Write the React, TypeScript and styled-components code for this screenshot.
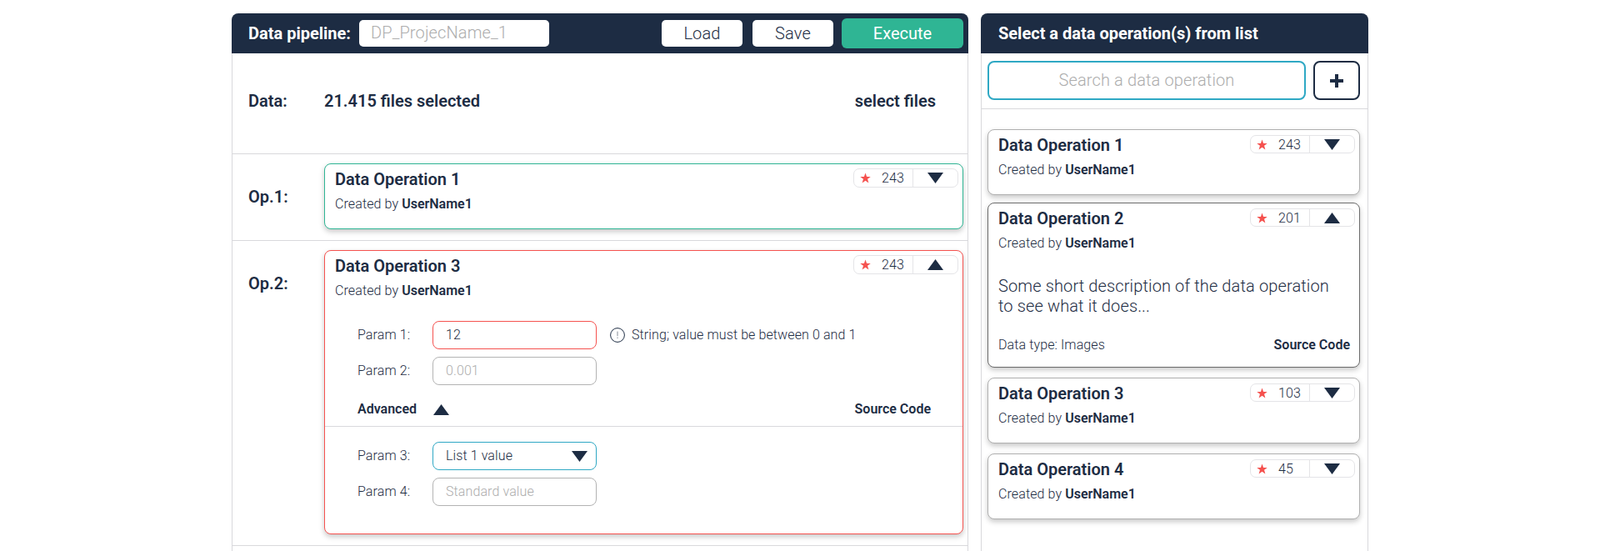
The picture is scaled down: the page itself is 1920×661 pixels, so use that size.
import { createGlobalStyle, styled } from "styled-components";

const NAVY = "#1d2c43";
const GREEN = "#2fb594";
const RED = "#f5524f";
const BLUE = "#2fa8c4";
const LINE = "#d9d9dc";

const GlobalStyle = createGlobalStyle`
  html, body {
    margin: 0;
    padding: 0;
    background: #fff;
    height: 100%;
    overflow: hidden;
  }
  body {
    font-family: Roboto, "Liberation Sans", sans-serif;
    color: ${NAVY};
  }
  * {
    box-sizing: border-box;
  }
  input {
    font-family: inherit;
  }
`;

const Page = styled.div`
  display: flex;
  gap: 15px;
  padding: 16px 278px 0;
  height: 661px;
  overflow: hidden;
`;

const Panel = styled.section<{ $width: number }>`
  width: ${(p) => p.$width}px;
  flex: none;
  height: 800px;
  border: 1px solid ${LINE};
  border-top: 0;
  border-radius: 8px 8px 0 0;
`;

const PanelHeader = styled.header<{ $inset: number }>`
  height: 48px;
  margin: 0 -1px;
  background: ${NAVY};
  border-radius: 8px 8px 0 0;
  display: flex;
  align-items: center;
  padding: 0 6px 0 ${(p) => p.$inset}px;
  color: #fff;
  font-size: 20px;
  font-weight: 700;
`;

const NameInput = styled.input`
  width: 228px;
  height: 32px;
  margin-left: 10px;
  border: 0;
  border-radius: 5px;
  padding: 0 14px 2px;
  font-size: 20px;
  font-weight: 300;
  letter-spacing: 0.0065em;
  outline: none;
  &::placeholder {
    color: #adadad;
    opacity: 1;
  }
`;

const HeaderActions = styled.div`
  margin-left: auto;
  display: flex;
  align-items: center;
`;

const HeaderButton = styled.button`
  width: 97px;
  height: 32px;
  margin-right: 12px;
  border: 0;
  border-radius: 5px;
  background: #fff;
  color: ${NAVY};
  font-family: inherit;
  font-size: 20px;
  font-weight: 300;
  letter-spacing: 0.0065em;
`;

const ExecuteButton = styled.button`
  width: 146px;
  height: 36px;
  margin-left: -2px;
  border: 0;
  border-radius: 6px;
  background: ${GREEN};
  color: #fff;
  font-family: inherit;
  font-size: 20px;
  font-weight: 400;
`;

const DataRow = styled.div`
  height: 121px;
  display: flex;
  align-items: center;
  padding: 0 38px 7px 19px;
  border-bottom: 1px solid ${LINE};
  font-size: 20px;
  font-weight: 600;
`;

const RowLabel = styled.div`
  width: 91px;
  flex: none;
  font-size: 20px;
  font-weight: 600;
  line-height: 24px;
`;

const SelectFiles = styled.span`
  margin-left: auto;
`;

const OpRow = styled.div`
  display: flex;
  padding: 11px 5px 13px 19px;
  border-bottom: 1px solid ${LINE};

  ${RowLabel} {
    padding-top: 28px;
  }
`;

const Card = styled.article<{ $border: string }>`
  flex: 1;
  min-width: 0;
  background: #fff;
  border: 1px solid ${(p) => p.$border};
  border-radius: 8px;
  box-shadow: 0 3px 6px rgba(0, 0, 0, 0.22);
  padding-top: 5px;
`;

const CardHead = styled.div`
  display: flex;
  align-items: flex-start;
  justify-content: space-between;
  padding: 0 5px 0 12px;
`;

const CardTitle = styled.h3`
  margin: 0;
  font-size: 20px;
  font-weight: 600;
  line-height: 26px;
`;

const Rating = styled.div`
  width: 126px;
  height: 23px;
  display: flex;
  align-items: center;
  border: 1px solid #e4e4e7;
  border-radius: 7px;
`;

const RatingCount = styled.div`
  width: 71px;
  height: 100%;
  flex: none;
  display: flex;
  align-items: center;
  padding-left: 7px;
  border-right: 1px solid #e4e4e7;
  font-size: 16px;
  font-weight: 300;
  letter-spacing: 0.0065em;

  svg {
    margin-right: 13px;
  }
`;

const RatingToggle = styled.div`
  flex: 1;
  display: flex;
  justify-content: center;
`;

const CreatedBy = styled.p`
  margin: 7px 0 0;
  padding: 0 12px;
  font-size: 16px;
  font-weight: 300;
  letter-spacing: 0.0065em;
  line-height: 20px;

  b {
    font-weight: 600;
    letter-spacing: 0;
  }
`;

const CompactEnd = styled.div`
  height: 19px;
`;

const ParamBlock = styled.div<{ $pt: number; $pb: number }>`
  display: flex;
  flex-direction: column;
  gap: 9px;
  padding: ${(p) => p.$pt}px 0 ${(p) => p.$pb}px 39px;
`;

const ParamRow = styled.div`
  display: flex;
  align-items: center;
  font-size: 16px;
  font-weight: 300;
  letter-spacing: 0.0065em;
`;

const ParamLabel = styled.label`
  width: 90px;
  flex: none;
  padding-bottom: 2px;
`;

const ParamInput = styled.input<{ $error?: boolean }>`
  width: 197px;
  height: 34px;
  border: 1px solid ${(p) => (p.$error ? RED : "#b3b3b3")};
  border-radius: 8px;
  padding: 0 15px 2px;
  font-size: 16px;
  font-weight: 300;
  letter-spacing: 0.0065em;
  color: ${NAVY};
  outline: none;
  &::placeholder {
    color: #adadad;
    opacity: 1;
  }
`;

const ParamSelect = styled.div`
  width: 197px;
  height: 34px;
  display: flex;
  align-items: center;
  justify-content: space-between;
  border: 1px solid ${BLUE};
  border-radius: 8px;
  padding: 0 10px 0 15px;

  span {
    padding-bottom: 2px;
  }
`;

const Hint = styled.div`
  display: flex;
  align-items: center;
  gap: 8px;
  margin-left: 16px;

  span {
    padding-bottom: 2px;
  }
`;

const AdvancedBar = styled.div`
  display: flex;
  align-items: center;
  justify-content: space-between;
  padding: 19px 38px 10px 39px;
  border-bottom: 1px solid ${LINE};
  font-size: 16px;
  font-weight: 600;
  line-height: 20px;
`;

const AdvancedLabel = styled.div`
  display: flex;
  align-items: center;
  gap: 20px;
`;

const SearchRow = styled.div`
  display: flex;
  gap: 9px;
  padding: 9px 9px 10px 7px;
  border-bottom: 1px solid ${LINE};
`;

const SearchInput = styled.input`
  flex: 1;
  min-width: 0;
  height: 47px;
  border: 2px solid ${BLUE};
  border-radius: 8px;
  padding: 0 0 2px;
  text-align: center;
  font-size: 20px;
  font-weight: 300;
  letter-spacing: 0.0065em;
  outline: none;
  &::placeholder {
    color: #adadad;
    opacity: 1;
  }
`;

const AddButton = styled.button`
  width: 56px;
  height: 47px;
  flex: none;
  display: flex;
  align-items: center;
  justify-content: center;
  background: #fff;
  border: 2px solid ${NAVY};
  border-radius: 8px;
  padding: 0;
`;

const CardList = styled.div`
  display: flex;
  flex-direction: column;
  gap: 12px;
  padding: 24px 9px 0 7px;

  & > :first-child {
    margin-bottom: -3px;
  }

  ${Rating} {
    margin-top: 1px;
    height: 22px;
  }
`;

const Description = styled.p`
  margin: 29px 0 0;
  padding: 0 12px;
  font-size: 20px;
  font-weight: 300;
  letter-spacing: 0.0065em;
  line-height: 24px;
`;

const CardFooter = styled.div`
  display: flex;
  justify-content: space-between;
  margin-top: 25px;
  padding: 0 11px 16px 12px;
  font-size: 16px;
  line-height: 20px;
  font-weight: 300;
  letter-spacing: 0.0065em;

  b {
    font-weight: 600;
    letter-spacing: 0;
  }
`;

function Triangle({ up }: { up?: boolean }) {
  return (
    <svg width="19" height="13" viewBox="0 0 19 13" style={{ display: "block", flex: "none" }}>
      <polygon points={up ? "9.5,0 19,13 0,13" : "0,0 19,0 9.5,13"} fill={NAVY} />
    </svg>
  );
}

function Star() {
  return (
    <svg width="13" height="13" viewBox="0 0 24 24" style={{ flex: "none" }}>
      <polygon
        points="12,1 15,9 23.5,9 16.7,14.4 19.2,23 12,18 4.8,23 7.3,14.4 0.5,9 9,9"
        fill={RED}
      />
    </svg>
  );
}

function InfoIcon() {
  return (
    <svg width="18" height="18" viewBox="0 0 18 18" style={{ flex: "none" }}>
      <circle cx="9" cy="9" r="8.4" fill="none" stroke={NAVY} strokeWidth="1" />
      <rect x="8.4" y="4.6" width="1.2" height="5.6" fill="#9a9fa8" />
      <rect x="8.4" y="11.6" width="1.2" height="1.4" fill="#9a9fa8" />
    </svg>
  );
}

function PlusIcon() {
  return (
    <svg width="16" height="16" viewBox="0 0 16 16">
      <path d="M6 0h4v6h6v4h-6v6H6v-6H0V6h6z" fill={NAVY} />
    </svg>
  );
}

function RatingBox({ count, open }: { count: number; open?: boolean }) {
  return (
    <Rating>
      <RatingCount>
        <Star />
        {count}
      </RatingCount>
      <RatingToggle>
        <Triangle up={open} />
      </RatingToggle>
    </Rating>
  );
}

function OpHead({ title, count, open }: { title: string; count: number; open?: boolean }) {
  return (
    <>
      <CardHead>
        <CardTitle>{title}</CardTitle>
        <RatingBox count={count} open={open} />
      </CardHead>
      <CreatedBy>
        Created by <b>UserName1</b>
      </CreatedBy>
    </>
  );
}

const catalog = [
  { title: "Data Operation 1", count: 243 },
  { title: "Data Operation 2", count: 201, open: true },
  { title: "Data Operation 3", count: 103 },
  { title: "Data Operation 4", count: 45 },
];

export default function App() {
  return (
    <Page>
      <GlobalStyle />
      <Panel $width={884}>
        <PanelHeader $inset={20}>
          Data pipeline:
          <NameInput placeholder="DP_ProjecName_1" />
          <HeaderActions>
            <HeaderButton>Load</HeaderButton>
            <HeaderButton>Save</HeaderButton>
            <ExecuteButton>Execute</ExecuteButton>
          </HeaderActions>
        </PanelHeader>

        <DataRow>
          <RowLabel>Data:</RowLabel>
          21.415 files selected
          <SelectFiles>select files</SelectFiles>
        </DataRow>

        <OpRow>
          <RowLabel>Op.1:</RowLabel>
          <Card $border={GREEN}>
            <OpHead title="Data Operation 1" count={243} />
            <CompactEnd />
          </Card>
        </OpRow>

        <OpRow>
          <RowLabel>Op.2:</RowLabel>
          <Card $border={RED}>
            <OpHead title="Data Operation 3" count={243} open />
            <ParamBlock $pt={26} $pb={0}>
              <ParamRow>
                <ParamLabel>Param 1:</ParamLabel>
                <ParamInput $error defaultValue="12" />
                <Hint>
                  <InfoIcon />
                  <span>String; value must be between 0 and 1</span>
                </Hint>
              </ParamRow>
              <ParamRow>
                <ParamLabel>Param 2:</ParamLabel>
                <ParamInput placeholder="0.001" />
              </ParamRow>
            </ParamBlock>
            <AdvancedBar>
              <AdvancedLabel>
                Advanced
                <Triangle up />
              </AdvancedLabel>
              Source Code
            </AdvancedBar>
            <ParamBlock $pt={18} $pb={33}>
              <ParamRow>
                <ParamLabel>Param 3:</ParamLabel>
                <ParamSelect>
                  <span>List 1 value</span>
                  <Triangle />
                </ParamSelect>
              </ParamRow>
              <ParamRow>
                <ParamLabel>Param 4:</ParamLabel>
                <ParamInput placeholder="Standard value" />
              </ParamRow>
            </ParamBlock>
          </Card>
        </OpRow>
      </Panel>

      <Panel $width={465}>
        <PanelHeader $inset={21}>Select a data operation(s) from list</PanelHeader>
        <SearchRow>
          <SearchInput placeholder="Search a data operation" />
          <AddButton>
            <PlusIcon />
          </AddButton>
        </SearchRow>
        <CardList>
          {catalog.map((op) => (
            <Card key={op.title} $border={op.open ? "#6b6b6b" : "#b0b0b0"}>
              <OpHead title={op.title} count={op.count} open={op.open} />
              {op.open ? (
                <>
                  <Description>
                    Some short description of the data operation
                    <br />
                    to see what it does...
                  </Description>
                  <CardFooter>
                    Data type: Images
                    <b>Source Code</b>
                  </CardFooter>
                </>
              ) : (
                <CompactEnd />
              )}
            </Card>
          ))}
        </CardList>
      </Panel>
    </Page>
  );
}
